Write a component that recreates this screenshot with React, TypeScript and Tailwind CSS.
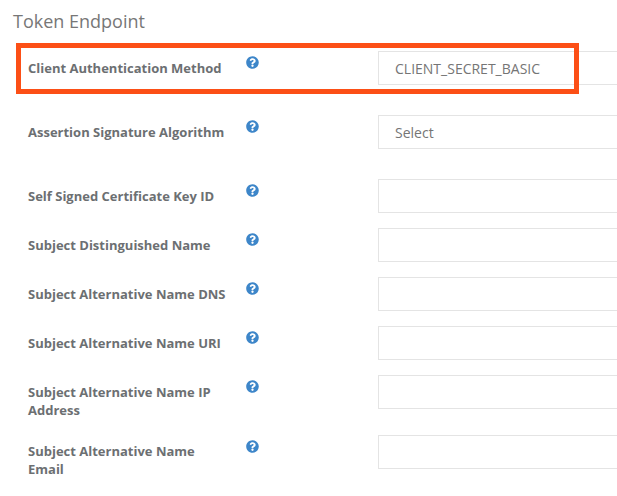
import React from 'react';
import { FaQuestionCircle } from 'react-icons/fa';

const rows = [
  { label: 'Client Authentication Method', value: 'CLIENT_SECRET_BASIC', mb: 'mb-[30px]', pt: 'pt-[8px]' },
  { label: 'Assertion Signature Algorithm', value: 'Select', mb: 'mb-[30px]', pt: 'pt-[8px]' },
  { label: 'Self Signed Certificate Key ID', value: '', mb: 'mb-[15px]', pt: 'pt-[8px]' },
  { label: 'Subject Distinguished Name', value: '', mb: 'mb-[15px]', pt: 'pt-[8px]' },
  { label: 'Subject Alternative Name DNS', value: '', mb: 'mb-[15px]', pt: 'pt-[8px]' },
  { label: 'Subject Alternative Name URI', value: '', mb: 'mb-[15px]', pt: 'pt-[8px]' },
  { label: 'Subject Alternative Name IP Address', value: '', mb: 'mb-[16px]', pt: 'pt-[8px]' },
  { label: 'Subject Alternative Name Email', value: '', mb: 'mb-[15px]', pt: 'pt-[7px]' },
];

const App: React.FC = () => {
  return (
    <div className="relative w-[617px] h-[496px] overflow-hidden bg-white font-['Open_Sans',sans-serif]">
      <h2 className="pl-[13px] pt-[9px] h-[51px] text-[18px] leading-[25px] font-normal text-[#777777]">
        Token Endpoint
      </h2>

      {rows.map((row) => (
        <div key={row.label} className={`flex w-[700px] pl-[28px] ${row.mb}`}>
          <label className={`w-[200px] shrink-0 ${row.pt} text-[13px] leading-[18px] font-bold text-[#6c6f72]`}>
            {row.label}
          </label>
          <div className="w-[150px] shrink-0 pl-[18px] pt-[5px]">
            <FaQuestionCircle className="text-[13px] text-[#3d86c9]" />
          </div>
          <input
            readOnly
            value={row.value}
            className="w-[300px] h-[34px] shrink-0 self-start border border-[#e4e4e4] bg-white pl-[16px] text-[14px] text-[#757575] outline-none"
          />
        </div>
      ))}

      {/* red highlight drawn over the first row */}
      <div className="absolute left-[16px] top-[43px] w-[563px] h-[51px] border-[5px] border-[#fc4f16]" />
    </div>
  );
};

export default App;
